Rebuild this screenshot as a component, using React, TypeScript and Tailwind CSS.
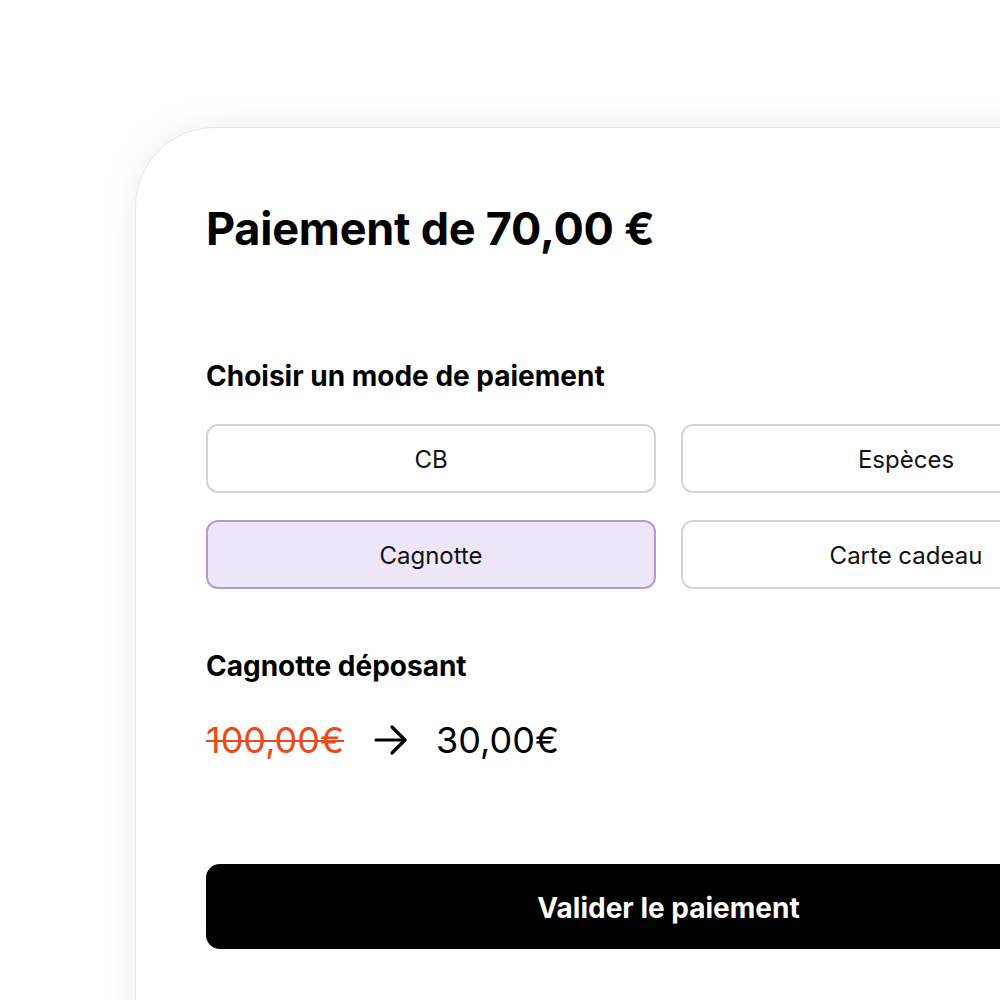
const modes = [
  { label: 'CB', active: false },
  { label: 'Espèces', active: false },
  { label: 'Cagnotte', active: true },
  { label: 'Carte cadeau', active: false },
];

export default function App() {
  return (
    <div className="h-screen w-full overflow-hidden bg-white pl-[135px] pt-[127px]" style={{ fontFamily: 'Inter, "Noto Sans", sans-serif' }}>
      <div className="w-[1067px] h-[1000px] rounded-tl-[80px] border border-[#e6e6e6] bg-white pl-[70px] pr-[70px] pt-[74px] shadow-[0_0_40px_rgba(0,0,0,0.07)]">
        <h1 className="text-[45px] leading-[53px] font-bold tracking-[-0.005em] text-black">Paiement de 70,00 €</h1>

        <h2 className="mt-[105px] text-[28px] leading-[32px] font-bold text-black">Choisir un mode de paiement</h2>
        <div className="mt-[32px] grid grid-cols-2 gap-x-[25px] gap-y-[27px]">
          {modes.map((m) => (
            <button
              key={m.label}
              className={`h-[69px] rounded-[12px] border-2 pt-[3px] text-[24px] text-[#111] ${
                m.active ? 'border-[#b79ad6] bg-[#f0e6f9]' : 'border-[#d4d4d4] bg-white'
              }`}
            >
              {m.label}
            </button>
          ))}
        </div>

        <h2 className="mt-[61px] text-[28px] leading-[32px] font-bold text-black">Cagnotte déposant</h2>
        <div className="mt-[38px] flex items-center text-[36px] leading-[40px]">
          <span className="text-[#ea4a1c] line-through decoration-2">100,00€</span>
          <svg className="ml-[30px] h-[32px] w-[34px]" viewBox="0 0 34 32" fill="none" stroke="black" strokeWidth={3.2} strokeLinecap="round" strokeLinejoin="round">
            <path d="M2 16h29" />
            <path d="M18 3l13 13-13 13" />
          </svg>
          <span className="ml-[28px] text-black">30,00€</span>
        </div>

        <button className="mt-[104px] h-[85px] w-full rounded-[14px] bg-black pt-[2px] text-[28px] font-bold text-white">
          Valider le paiement
        </button>
      </div>
    </div>
  );
}
